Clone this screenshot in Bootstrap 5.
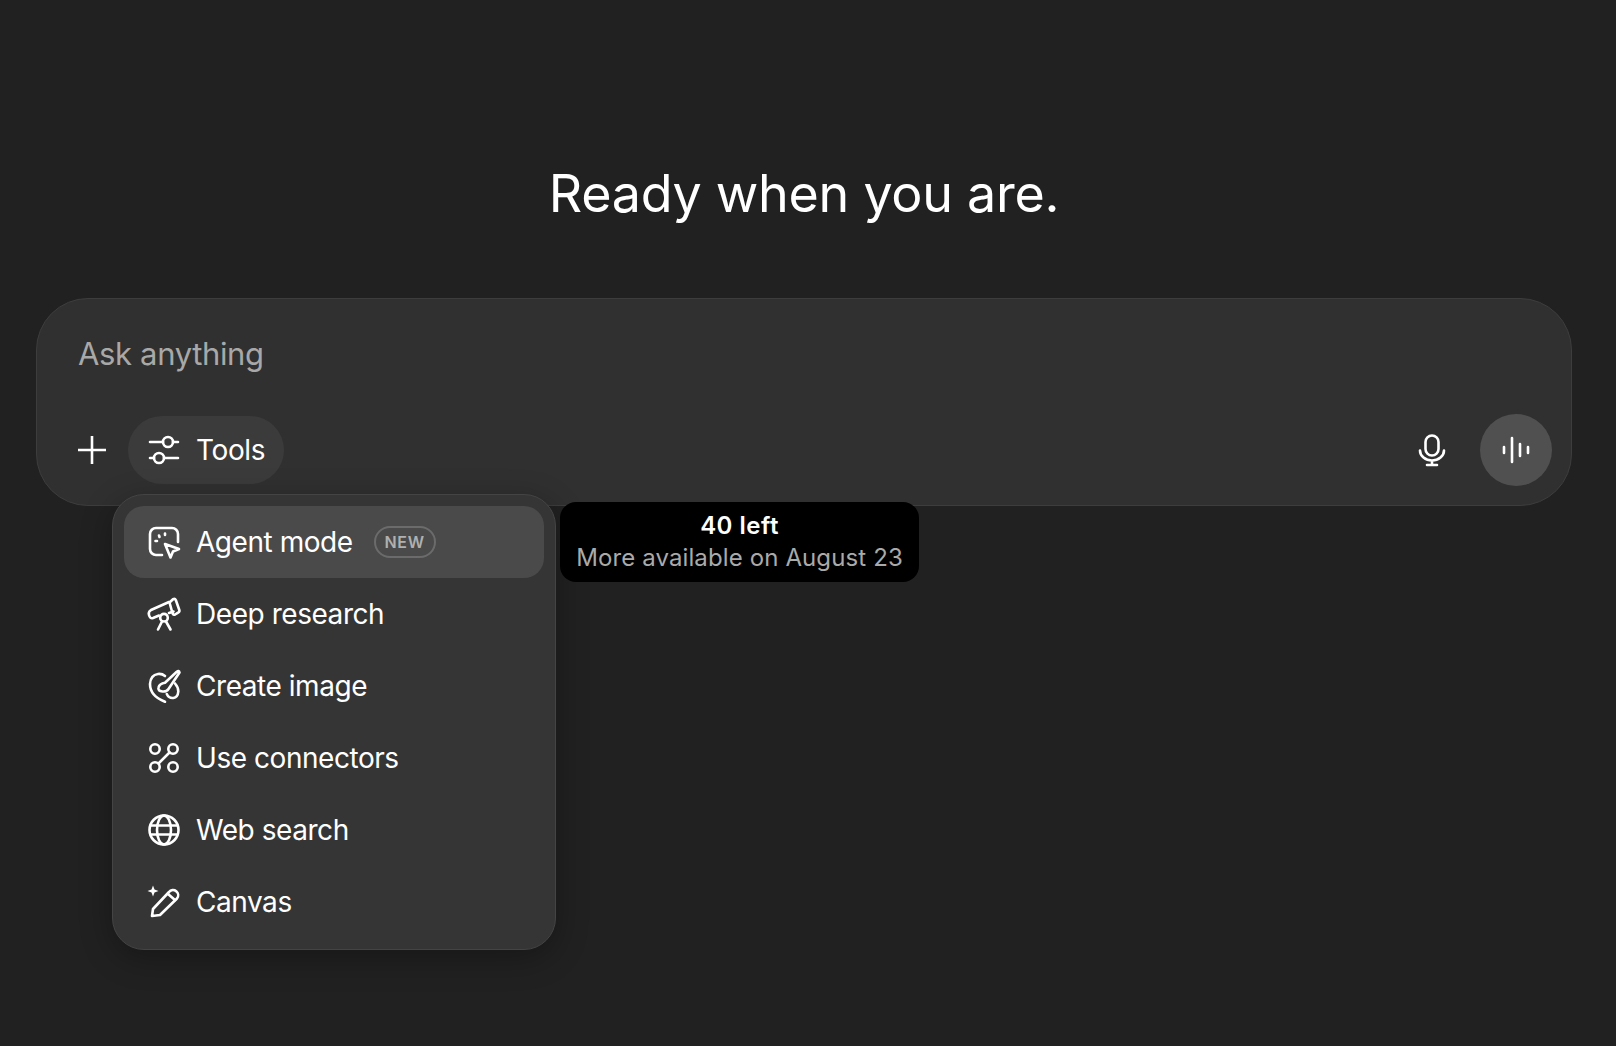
<!DOCTYPE html>
<html lang="en">

<head>
	<meta charset="UTF-8">
	<title>Ready when you are.</title>
	<link href="https://cdn.jsdelivr.net/npm/bootstrap@5.3.0/dist/css/bootstrap.min.css" rel="stylesheet">
	<style>
		body {
			background: #212121;
			color: #fff;
			font-family: Inter, "Liberation Sans", sans-serif;
			min-height: 100vh;
		}

		.page-wrap {
			padding: 162px 44px 0 36px;
		}

		.hero-title {
			font-size: 52px;
			font-weight: 400;
			line-height: 64px;
			letter-spacing: -.27px;
			margin-bottom: 72px;
			color: #fff;
		}

		.composer {
			background: #303030;
			border: 1px solid #3d3d3d;
			border-radius: 52px;
			height: 208px;
		}

		.composer-text {
			color: #a8a8a8;
			font-size: 31px;
			letter-spacing: -.35px;
			line-height: 48px;
			padding: 31px 0 0 41px;
		}

		.composer-bar {
			padding: 0 19px;
			margin-top: 36px;
		}

		.bar-btn {
			width: 72px;
			height: 72px;
			border: 0;
			background: transparent;
			color: #fff;
			padding: 0;
		}

		.voice-btn {
			background: #505050;
		}

		.tools-btn {
			height: 68px;
			width: 156px;
			border: 0;
			color: #fff;
			background: #3b3b3b;
			font-size: 28px;
			letter-spacing: -.4px;
			padding: 0 0 0 20px;
		}

		svg.line-icon {
			fill: none;
			stroke: currentColor;
			stroke-width: 2.6;
			stroke-linecap: round;
			stroke-linejoin: round;
			flex: none;
			overflow: visible;
		}

		.tools-menu {
			position: absolute;
			left: 76px;
			top: 196px;
			width: 444px;
			padding: 11px;
			background: #353535;
			border: 1px solid #444;
			border-radius: 32px;
			box-shadow: 0 8px 32px rgba(0, 0, 0, .3);
		}

		.menu-row {
			height: 72px;
			padding: 0 24px;
			gap: 16px;
			color: #fff;
			font-size: 28px;
			letter-spacing: -.45px;
			border-radius: 20px;
		}

		.menu-row.is-hover {
			background: #4a4a4a;
		}

		.new-tag {
			margin-left: 5px;
			height: 32px;
			width: 62px;
			border: 2px solid #6b6b6b;
			border-radius: 16px;
			color: #b0b0b0;
			font-size: 16px;
			font-weight: 600;
			letter-spacing: .8px;
		}

		.limit-tip {
			position: absolute;
			left: 524px;
			top: 204px;
			width: 359px;
			height: 80px;
			background: #000;
			border-radius: 16px;
			font-size: 24px;
			line-height: 32px;
			letter-spacing: .12px;
			padding-top: 8px;
		}

		.limit-tip strong {
			font-weight: 600;
			letter-spacing: .5px;
		}

		.limit-tip span {
			color: #aaa;
		}
	</style>
</head>

<body>

	<div class="page-wrap">
		<h1 class="hero-title text-center">Ready when you are.</h1>

		<div class="position-relative">
			<div class="composer">
				<div class="composer-text">Ask anything</div>
				<div class="composer-bar d-flex align-items-center">
					<button class="bar-btn d-flex align-items-center justify-content-center" type="button" aria-label="Add">
						<svg class="line-icon" width="32" height="32" viewBox="0 0 32 32">
							<path stroke-linecap="butt" d="M16 2v28M2 16h28" />
						</svg>
					</button>
					<button class="tools-btn rounded-pill d-flex align-items-center gap-3" type="button">
						<svg class="line-icon" width="32" height="32" viewBox="0 0 32 32">
							<path d="M2 8h13M25 8h5M2 24h4M16 24h14" />
							<circle cx="20" cy="8" r="5" />
							<circle cx="11" cy="24" r="5" />
						</svg>
						Tools
					</button>
					<div class="ms-auto d-flex align-items-center gap-2">
						<button class="bar-btn d-flex align-items-center justify-content-center me-1" type="button" aria-label="Dictate">
							<svg class="line-icon" width="32" height="32" viewBox="0 0 32 32">
								<rect x="9.500" y="1.500" width="13" height="20" rx="6.500" />
								<path d="M4 16.500a12 10 0 0 0 24 0M16 27v4M11 31h10" />
							</svg>
						</button>
						<button class="bar-btn voice-btn rounded-circle d-flex align-items-center justify-content-center" type="button" aria-label="Voice">
							<svg class="line-icon" width="32" height="32" viewBox="0 0 32 32">
								<path d="M4 13v6M12 4v24M20 10v12M28 13v6" />
							</svg>
						</button>
					</div>
				</div>
			</div>

			<div class="tools-menu">
				<div class="menu-row is-hover d-flex align-items-center">
					<svg class="line-icon" width="32" height="32" viewBox="0 0 32 32">
						<path d="M30 16V8a6 6 0 0 0-6-6H8a6 6 0 0 0-6 6v15a6 6 0 0 0 6 6h6" />
						<path d="M17 18l14 5-6 2.500-2.500 6zM11 9.500l.5 1.500M7.500 15h1.500M17 7.500v1.500" />
					</svg>
					<span>Agent mode</span>
					<span class="new-tag d-flex align-items-center justify-content-center">NEW</span>
				</div>
				<div class="menu-row d-flex align-items-center">
					<svg class="line-icon" width="32" height="32" viewBox="0 0 32 32">
						<path d="M21 4L3 12Q0 14 1 17q1 4 4 3l6-2.500M21 15l4.500-1.500" />
						<path d="M21.500 4.500l3.500-3.300q2-.9 2.800.8l3.500 10q.6 1.800-1.200 2.600l-3 1.900q-1.700.8-2.500-1z" />
						<circle cx="16" cy="19.700" r="3.800" />
						<path d="M14 23.500l-4 8M18 23.500l4.500 8" />
					</svg>
					<span>Deep research</span>
				</div>
				<div class="menu-row d-flex align-items-center">
					<svg class="line-icon" width="32" height="32" viewBox="0 0 32 32">
						<path d="M17 31.700Q2 26 2 14 2.500 5 10 4q4-.5 7 2" />
						<path d="M17 12.700L28.500 2q2.500-2 3 .5L20.500 19q-2 3-6 2.500-5-.5-4-4 1-4 6.500-4.800z" />
						<path d="M27 13.500q3.500 4 3.300 8-.5 6-5 6.500-4.500.5-6.500-4" />
					</svg>
					<span>Create image</span>
				</div>
				<div class="menu-row d-flex align-items-center">
					<svg class="line-icon" width="32" height="32" viewBox="0 0 32 32">
						<circle cx="7" cy="7" r="4.700" />
						<circle cx="25" cy="7" r="4.700" />
						<circle cx="7" cy="25" r="4.700" />
						<circle cx="25" cy="25" r="4.700" />
						<path d="M21.500 10.500l-11 11" />
					</svg>
					<span>Use connectors</span>
				</div>
				<div class="menu-row d-flex align-items-center">
					<svg class="line-icon" width="32" height="32" viewBox="0 0 32 32">
						<circle cx="16" cy="16" r="14.500" />
						<ellipse cx="16" cy="16" rx="7" ry="14.500" />
						<path d="M3 11.500h26M3 20.500h26" />
					</svg>
					<span>Web search</span>
				</div>
				<div class="menu-row d-flex align-items-center">
					<svg class="line-icon" width="32" height="32" viewBox="0 0 32 32">
						<path d="M4 30l1-7L21 6a5 5 0 0 1 8 6.500L12 29z" />
						<path d="M20 8l7 6" />
						<path fill="currentColor" stroke="none" d="M5 -.5l1.500 4 4 1.500-4 1.500-1.500 4-1.500-4-4-1.500 4-1.500z" />
					</svg>
					<span>Canvas</span>
				</div>
			</div>

			<div class="limit-tip text-center">
				<strong class="d-block">40 left</strong>
				<span class="d-block">More available on August 23</span>
			</div>
		</div>
	</div>

	<script src="https://cdn.jsdelivr.net/npm/bootstrap@5.3.0/dist/js/bootstrap.bundle.min.js"></script>
</body>

</html>
